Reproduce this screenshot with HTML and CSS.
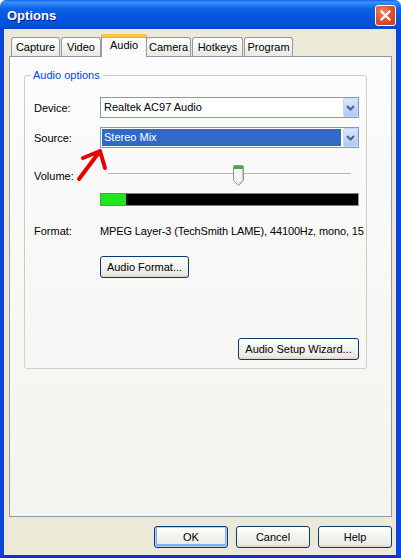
FILE: index.html
```html
<!DOCTYPE html>
<html lang="en">
<head>
    <meta charset="UTF-8">
    <title>Options</title>
    <link rel="stylesheet" href="styles.css">
</head>
<body>
    <div class="window">
        <div class="titlebar">
            <span class="title">Options</span>
            <span class="close">
                <svg width="19" height="19" viewBox="0 0 19 19">
                    <path d="M5.5 5.5 L13.5 13.5 M13.5 5.5 L5.5 13.5" stroke="#fff" stroke-width="2.2" stroke-linecap="square"/>
                </svg>
            </span>
        </div>

        <div class="frame">
            <div class="tabs">
                <span class="tab tab-capture">Capture</span>
                <span class="tab tab-video">Video</span>
                <span class="tab tab-audio active">Audio</span>
                <span class="tab tab-camera">Camera</span>
                <span class="tab tab-hotkeys">Hotkeys</span>
                <span class="tab tab-program">Program</span>
            </div>

            <div class="panel">
                <fieldset class="group">
                    <legend>Audio options</legend>

                    <div class="row">
                        <span class="label">Device:</span>
                        <div class="select">
                            <span class="value">Realtek AC97 Audio</span>
                            <span class="drop">
                                <svg width="9" height="6" viewBox="0 0 9 6"><path d="M1 1 L4.5 4.5 L8 1" fill="none" stroke="#4d6185" stroke-width="2"/></svg>
                            </span>
                        </div>
                    </div>

                    <div class="row row-source">
                        <span class="label">Source:</span>
                        <div class="select focused">
                            <span class="value">Stereo Mix</span>
                            <span class="drop">
                                <svg width="9" height="6" viewBox="0 0 9 6"><path d="M1 1 L4.5 4.5 L8 1" fill="none" stroke="#4d6185" stroke-width="2"/></svg>
                            </span>
                        </div>
                    </div>

                    <div class="row row-volume">
                        <span class="label">Volume:</span>
                        <div class="slider">
                            <div class="track"></div>
                            <svg class="thumb" width="11" height="21" viewBox="0 0 11 21">
                                <path d="M0.5 1.5 Q0.5 0.5 1.5 0.5 L9.5 0.5 Q10.5 0.5 10.5 1.5 L10.5 15.5 L5.5 20.5 L0.5 15.5 Z" fill="#f6f6f3" stroke="#8c9a8c"/>
                                <rect x="1" y="1" width="9" height="3" fill="#3cb43c"/>
                                <path d="M9.5 4 L9.5 15 L5.5 19" fill="none" stroke="#c9c8bd"/>
                            </svg>
                        </div>
                    </div>

                    <div class="meter">
                        <div class="level" style="width: 25px"></div>
                    </div>

                    <div class="row row-format">
                        <span class="label">Format:</span>
                        <span class="format">MPEG Layer-3 (TechSmith LAME), 44100Hz, mono, 15</span>
                    </div>

                    <div class="row row-btn">
                        <span class="label"></span>
                        <button class="btn btn-format">Audio Format...</button>
                    </div>

                    <div class="row row-wizard">
                        <button class="btn btn-wizard">Audio Setup Wizard...</button>
                    </div>
                </fieldset>

                <!-- hand drawn arrow over the dialog -->
                <svg class="arrow" width="36" height="42" viewBox="0 0 36 42">
                    <path d="M5 35 L26 7 M9 14 L26 7 L31 24" fill="none" stroke="#e80000" stroke-width="4" stroke-linecap="round" stroke-linejoin="round"/>
                </svg>
            </div>

            <div class="buttons">
                <button class="btn btn-default">OK</button>
                <button class="btn">Cancel</button>
                <button class="btn">Help</button>
            </div>
        </div>
    </div>
</body>
</html>
```

FILE: styles.css
```css
body {
    margin: 0;
    font-family: 'Liberation Sans', Arial, sans-serif;
    font-size: 11px;
    color: #000;
    background: #fff;
}

.window {
    width: 401px;
    height: 558px;
    display: flex;
    flex-direction: column;
}

.titlebar {
    height: 29px;
    display: flex;
    align-items: center;
    justify-content: space-between;
    padding: 0 5px 0 7px;
    background: linear-gradient(to bottom, #0a5ee8 0%, #3e94fb 7%, #2a80f6 14%, #0d62e4 30%, #0558e0 55%, #0454dc 80%, #0347cd 100%);
    border-radius: 6px 6px 0 0;
}

.title {
    color: #fff;
    font-weight: bold;
    font-size: 13px;
    text-shadow: 1px 1px 0 #0a1f86;
    margin-top: 1px;
}

.close {
    width: 19px;
    height: 19px;
    border: 1px solid #fff;
    border-radius: 3px;
    background: radial-gradient(circle at 35% 30%, #ef8d6f 0%, #e0532f 45%, #c93a18 100%);
    display: flex;
    margin-top: 1px;
}

.frame {
    flex: 1;
    background: #ece9d8;
    border-left: 4px solid #0a46d8;
    border-right: 5px solid #0a46d8;
    border-bottom: 3px solid #0735c8;
    padding: 5px 4px 0 5px;
    display: flex;
    flex-direction: column;
}

/* tab strip */
.tabs {
    display: flex;
    align-items: flex-end;
    height: 22px;
    padding-left: 2px;
    position: relative;
    z-index: 2;
}

.tab {
    box-sizing: border-box;
    height: 19px;
    line-height: 19px;
    text-align: center;
    margin-right: 1px;
    border: 1px solid #919b9c;
    border-bottom: none;
    border-radius: 3px 3px 0 0;
    background: linear-gradient(to bottom, #ffffff, #f3f2ee 60%, #e9e8e2);
}

.tab-capture { width: 49px; }
.tab-video { width: 40px; }
.tab-audio { width: 46px; }
.tab-camera { width: 45px; }
.tab-hotkeys { width: 51px; }
.tab-program { width: 49px; }

.tab.active {
    height: 23px;
    line-height: 17px;
    margin: 0 -1px -1px -1px;
    border-top: 3px solid #ffc83c;
    box-shadow: inset 0 1px 0 #f5a94a;
    background: #fcfcfe;
    position: relative;
}

.panel {
    position: relative;
    width: 383px;
    height: 461px;
    box-sizing: border-box;
    border: 1px solid #919b9c;
    background: linear-gradient(to bottom, #fcfcfe, #f4f3ee);
}

.group {
    width: 343px;
    min-width: 0;
    box-sizing: border-box;
    margin: 12px 0 0 14px;
    padding: 15px 7px 8px 9px;
    border: 1px solid #d0d0bf;
    border-radius: 3px;
}

.group legend {
    color: #0046d5;
    padding: 0 2px;
    margin-left: -3px;
    line-height: 13px;
}

.row {
    display: flex;
    align-items: center;
}

.label {
    width: 66px;
    flex-shrink: 0;
}

.row-source {
    margin-top: 9px;
}

.row-volume {
    margin-top: 17px;
}

.row-format {
    margin-top: 19px;
    line-height: 13px;
}

.row-btn {
    margin-top: 18px;
}

.row-wizard {
    margin-top: 60px;
    justify-content: flex-end;
}

/* combo box */
.select {
    display: flex;
    width: 259px;
    height: 21px;
    box-sizing: border-box;
    border: 1px solid #7f9db9;
    background: #fff;
}

.select .value {
    flex: 1;
    margin: 1px;
    padding-left: 2px;
    line-height: 17px;
}

.select.focused .value {
    background: #316ac5;
    color: #fff;
}

.drop {
    width: 15px;
    margin-left: 1px;
    box-sizing: border-box;
    border: 1px solid #c3d3fd;
    border-radius: 2px;
    background: linear-gradient(to bottom, #dce6fd, #c1d3fb 60%, #b2c7f7);
    display: flex;
    align-items: center;
    justify-content: center;
}

/* trackbar */
.slider {
    position: relative;
    width: 259px;
    height: 21px;
}

.track {
    margin: 8px 8px 0 8px;
    height: 1px;
    background: #b9b5a6;
    border-bottom: 1px solid #fff;
}

.thumb {
    position: absolute;
    left: 133px;
    top: 0;
}

.meter {
    margin: 7px 0 0 66px;
    width: 259px;
    height: 13px;
    box-sizing: border-box;
    border: 1px solid #808080;
    border-right-color: #9a9a9a;
    background: #000;
}

.level {
    height: 100%;
    background: #1ee61e;
}

.format {
    width: 259px;
    flex-shrink: 0;
    white-space: nowrap;
    letter-spacing: -0.12px;
}

/* push buttons */
.btn {
    font-family: inherit;
    font-size: 11px;
    color: #000;
    height: 22px;
    padding: 0;
    border: 1px solid #003c74;
    border-radius: 3px;
    background: linear-gradient(to bottom, #ffffff, #f4f4f0 40%, #ecebe6 85%, #d8d4cb);
}

.btn-format {
    width: 89px;
}

.btn-wizard {
    width: 121px;
}

.buttons {
    display: flex;
    justify-content: flex-end;
    gap: 8px;
    margin-top: 9px;
}

.buttons .btn {
    width: 74px;
}

.btn-default {
    box-shadow: inset 0 0 0 1px #b2cbf5, inset 0 -1px 0 2px #89adec;
}

.arrow {
    position: absolute;
    left: 64px;
    top: 87px;
}
```
